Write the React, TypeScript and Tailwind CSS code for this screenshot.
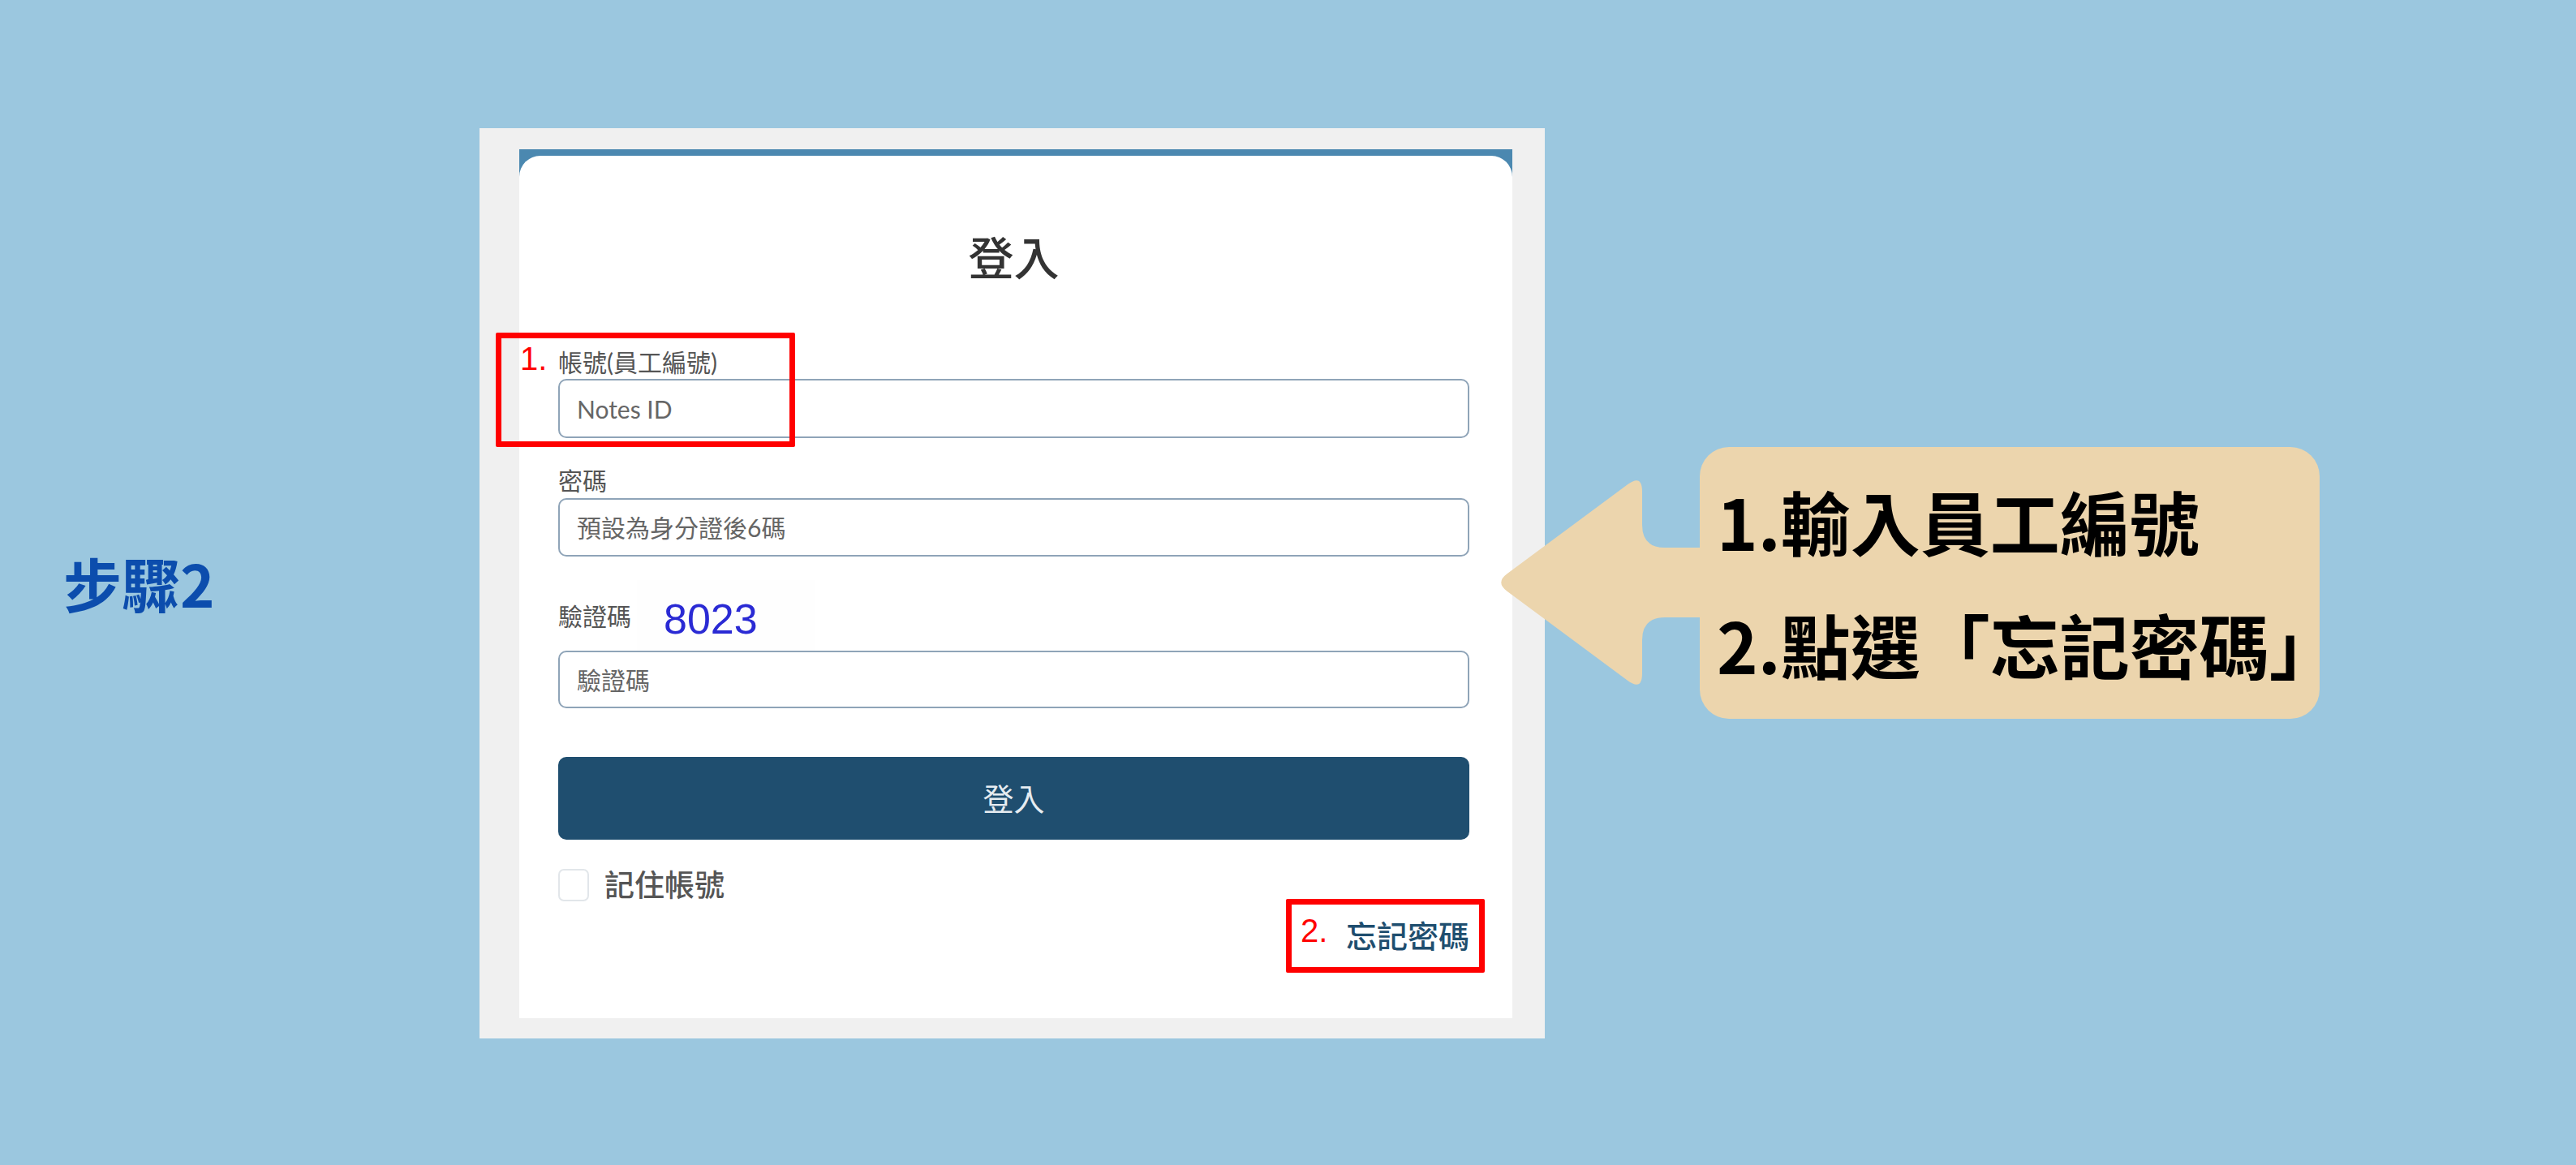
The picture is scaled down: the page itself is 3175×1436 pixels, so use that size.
import React from 'react';

// Step 2 slide: login panel screenshot with annotations and an arrow callout

function ArrowHead() {
  return (
    <svg width="252" height="252" viewBox="0 0 252 252" className="shrink-0 overflow-visible">
      <path
        d="M 14.5 115.3 L 163.3 5 Q 181 -8 181 14 L 181 55 Q 181 83 209 83 L 262 83 L 262 169 L 209 169 Q 181 169 181 197 L 181 238 Q 181 260 163.3 247 L 14.5 136.7 Q 0 126 14.5 115.3 Z"
        fill="#ecd5ad"
      />
    </svg>
  );
}

function Field({ placeholder, h }: { placeholder: string; h: string }) {
  return (
    <input
      type="text"
      placeholder={placeholder}
      className={`w-full ${h} rounded-[10px] border-2 border-[#8fa4b8] bg-white pl-[21px] text-[30px] text-[#444] placeholder:text-[#666] outline-none`}
    />
  );
}

export default function App() {
  return (
    <div className="w-[3175px] h-[1436px] bg-[#9bc7df] flex items-center pl-[78px] font-['Lato','Noto_Sans_CJK_TC',sans-serif]">
      {/* step label */}
      <div className="w-[513px] shrink-0 font-['Noto_Sans_CJK_TC',sans-serif] font-bold text-[72px] leading-[72px] text-[#0c4dad]">
        步驟2
      </div>

      {/* login screenshot */}
      <div className="w-[1313px] h-[1122px] mt-[2px] shrink-0 bg-[#f0f0f0] pl-[49px] pr-[40px] pt-[26px] pb-[25px] flex">
        <div className="flex-1 bg-[#4b88b0] pt-[8px] flex flex-col">
          <div className="relative flex-1 bg-white rounded-t-[26px] pl-[48px] pr-[53px] flex flex-col">
            <h1 className="mt-[98px] text-center text-[56px] leading-[56px] text-[#333] font-medium">登入</h1>

            <label className="mt-[84px] text-[30px] leading-[32px] text-[#555]">帳號(員工編號)</label>
            <div className="mt-[5px]">
              <Field placeholder="Notes ID" h="h-[73px]" />
            </div>

            <label className="mt-[36px] text-[30px] leading-[32px] text-[#555]">密碼</label>
            <div className="mt-[6px]">
              <Field placeholder="預設為身分證後6碼" h="h-[72px]" />
            </div>

            <div className="mt-[29px] h-[87px] flex items-center">
              <span className="text-[30px] leading-[32px] text-[#555]">驗證碼</span>
              <div className="ml-[7px] w-[219px] h-[87px] bg-[#fefefe] flex items-center pl-[33px] pt-[9px]">
                <span className="font-['Liberation_Sans',sans-serif] text-[52px] leading-[52px] text-[#2a2ad4]">8023</span>
              </div>
            </div>
            <Field placeholder="驗證碼" h="h-[71px]" />

            <button className="mt-[60px] h-[102px] w-full rounded-[10px] bg-[#1f4e6f] text-[38px] text-[#e6ecf1]">
              登入
            </button>

            <div className="mt-[36px] h-[40px] flex items-center">
              <span className="w-[38px] h-[40px] rounded-[7px] border-2 border-[#e2e6ea] bg-white" />
              <span className="ml-[19px] text-[37px] leading-[40px] font-medium text-[#555]">記住帳號</span>
            </div>

            <div className="mt-[22px] h-[40px] flex justify-end">
              <span className="text-[38px] leading-[40px] font-medium text-[#1f4e6f]">忘記密碼</span>
            </div>

            {/* annotations */}
            <div className="absolute left-[-29px] top-[218px] w-[369px] h-[141px] border-[7px] border-[#ff0000] rounded-[2px]" />
            <span className="absolute left-[1px] top-[230px] font-['Liberation_Sans',sans-serif] text-[40px] leading-[40px] text-[#ff0000]">1.</span>
            <div className="absolute left-[945px] top-[916px] w-[245px] h-[91px] border-[7px] border-[#ff0000] rounded-[2px]" />
            <span className="absolute left-[963px] top-[935px] font-['Liberation_Sans',sans-serif] text-[40px] leading-[40px] text-[#ff0000]">2.</span>
          </div>
        </div>
      </div>

      {/* callout */}
      <div className="relative z-10 -ml-[61px] flex items-center shrink-0">
        <ArrowHead />
        <div className="w-[764px] h-[335px] bg-[#ecd5ad] rounded-[36px] pl-[21px] pt-[48px] flex flex-col gap-[66px] font-['Noto_Sans_CJK_TC',sans-serif] font-bold text-[86px] leading-[86px] text-black">
          <div>1.輸入員工編號</div>
          <div>2.點選「忘記密碼」</div>
        </div>
      </div>
    </div>
  );
}
